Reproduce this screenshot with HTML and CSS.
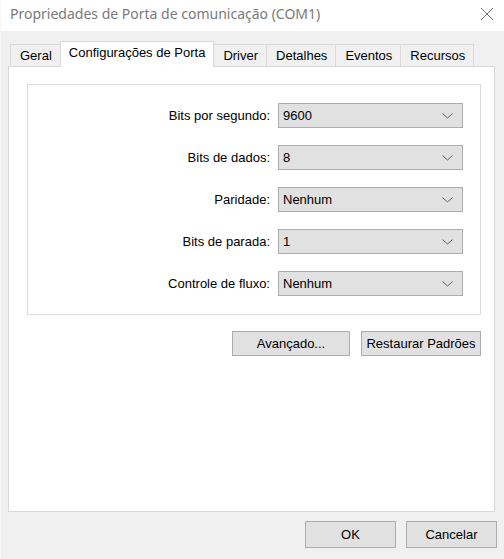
FILE: index.html
```html
<!DOCTYPE html>
<html lang="pt-BR">
<head>
  <meta charset="UTF-8" />
  <title>Propriedades de Porta de comunicação (COM1)</title>
  <link rel="stylesheet" href="styles.css">
</head>
<body>
  <div class="titlebar">
    <span class="title">Propriedades de Porta de comunicação (COM1)</span>
    <svg class="close" width="14" height="14" viewBox="0 0 14 14">
      <path d="M1 1 L13 13 M13 1 L1 13" stroke="#6d6d6d" stroke-width="1" fill="none" />
    </svg>
  </div>

  <div class="dialog">
    <div class="tabs">
      <div class="tab">Geral</div>
      <div class="tab selected">Configurações de Porta</div>
      <div class="tab">Driver</div>
      <div class="tab">Detalhes</div>
      <div class="tab">Eventos</div>
      <div class="tab">Recursos</div>
    </div>

    <div class="panel">
      <div class="group">
        <div class="row">
          <label>Bits por segundo:</label>
          <div class="combo"><span>9600</span><svg class="chevron" width="11" height="6" viewBox="0 0 11 6"><path d="M0.5 0.5 L5.5 5 L10.5 0.5" /></svg></div>
        </div>
        <div class="row">
          <label>Bits de dados:</label>
          <div class="combo"><span>8</span><svg class="chevron" width="11" height="6" viewBox="0 0 11 6"><path d="M0.5 0.5 L5.5 5 L10.5 0.5" /></svg></div>
        </div>
        <div class="row">
          <label>Paridade:</label>
          <div class="combo"><span>Nenhum</span><svg class="chevron" width="11" height="6" viewBox="0 0 11 6"><path d="M0.5 0.5 L5.5 5 L10.5 0.5" /></svg></div>
        </div>
        <div class="row">
          <label>Bits de parada:</label>
          <div class="combo"><span>1</span><svg class="chevron" width="11" height="6" viewBox="0 0 11 6"><path d="M0.5 0.5 L5.5 5 L10.5 0.5" /></svg></div>
        </div>
        <div class="row">
          <label>Controle de fluxo:</label>
          <div class="combo"><span>Nenhum</span><svg class="chevron" width="11" height="6" viewBox="0 0 11 6"><path d="M0.5 0.5 L5.5 5 L10.5 0.5" /></svg></div>
        </div>
      </div>

      <div class="panel-buttons">
        <button class="btn advanced">Avançado...</button>
        <button class="btn restore">Restaurar Padrões</button>
      </div>
    </div>

    <div class="footer">
      <button class="btn ok">OK</button>
      <button class="btn cancel">Cancelar</button>
    </div>
  </div>
</body>
</html>
```

FILE: styles.css
```css
* {
  box-sizing: border-box;
  margin: 0;
  padding: 0;
}

body {
  background-color: #f0f0f0;
  font-family: "Liberation Sans", Arial, sans-serif;
  font-size: 13px;
  color: #000;
  height: 559px;
  overflow: hidden;
  border-left: 1px solid #f7f7f7;
}

.titlebar {
  height: 31px;
  background-color: #fff;
  display: flex;
  align-items: center;
  justify-content: space-between;
  padding: 0 10px 4px 9px;
}

.title {
  font-family: "Noto Sans", "Open Sans", sans-serif;
  font-size: 14px;
  color: #7a7a7a;
}

.dialog {
  padding: 10px 9px 0 7px;
}

.tabs {
  display: flex;
  align-items: flex-end;
  height: 25px;
  padding-left: 2px;
}

.tab {
  height: 22px;
  padding: 0 8px 0 9px;
  line-height: 22px;
  background-color: #f0f0f0;
  border: 1px solid #d9d9d9;
  border-bottom: none;
  margin-left: -1px;
}

.tab:first-child {
  margin-left: 0;
}

.tab.selected {
  height: 26px;
  margin-bottom: -1px;
  padding: 0 8px;
  line-height: 22px;
  background-color: #fff;
  position: relative;
  z-index: 1;
}

.panel {
  height: 446px;
  background-color: #fff;
  border: 1px solid #d9d9d9;
  padding: 17px 13px 0 18px;
}

.group {
  border: 1px solid #dcdcdc;
  height: 231px;
  padding: 18px 17px 0 0;
  display: flex;
  flex-direction: column;
  gap: 17px;
}

.row {
  display: flex;
  align-items: center;
  justify-content: flex-end;
  gap: 8px;
}

.combo {
  width: 185px;
  height: 25px;
  background-color: #e1e1e1;
  border: 1px solid #adadad;
  display: flex;
  align-items: center;
  justify-content: space-between;
  padding: 0 9px 0 4px;
}

.chevron path {
  fill: none;
  stroke: #606060;
  stroke-width: 1;
}

.panel-buttons {
  display: flex;
  justify-content: flex-end;
  gap: 11px;
  margin-top: 16px;
}

.btn {
  height: 25px;
  background-color: #e1e1e1;
  border: 1px solid #adadad;
  font-family: "Liberation Sans", Arial, sans-serif;
  font-size: 13px;
  color: #000;
}

.advanced {
  width: 118px;
}

.restore {
  width: 120px;
}

.footer {
  display: flex;
  justify-content: flex-end;
  gap: 10px;
  margin-top: 9px;
  margin-right: -2px;
}

.ok,
.cancel {
  width: 91px;
  height: 27px;
}
```
